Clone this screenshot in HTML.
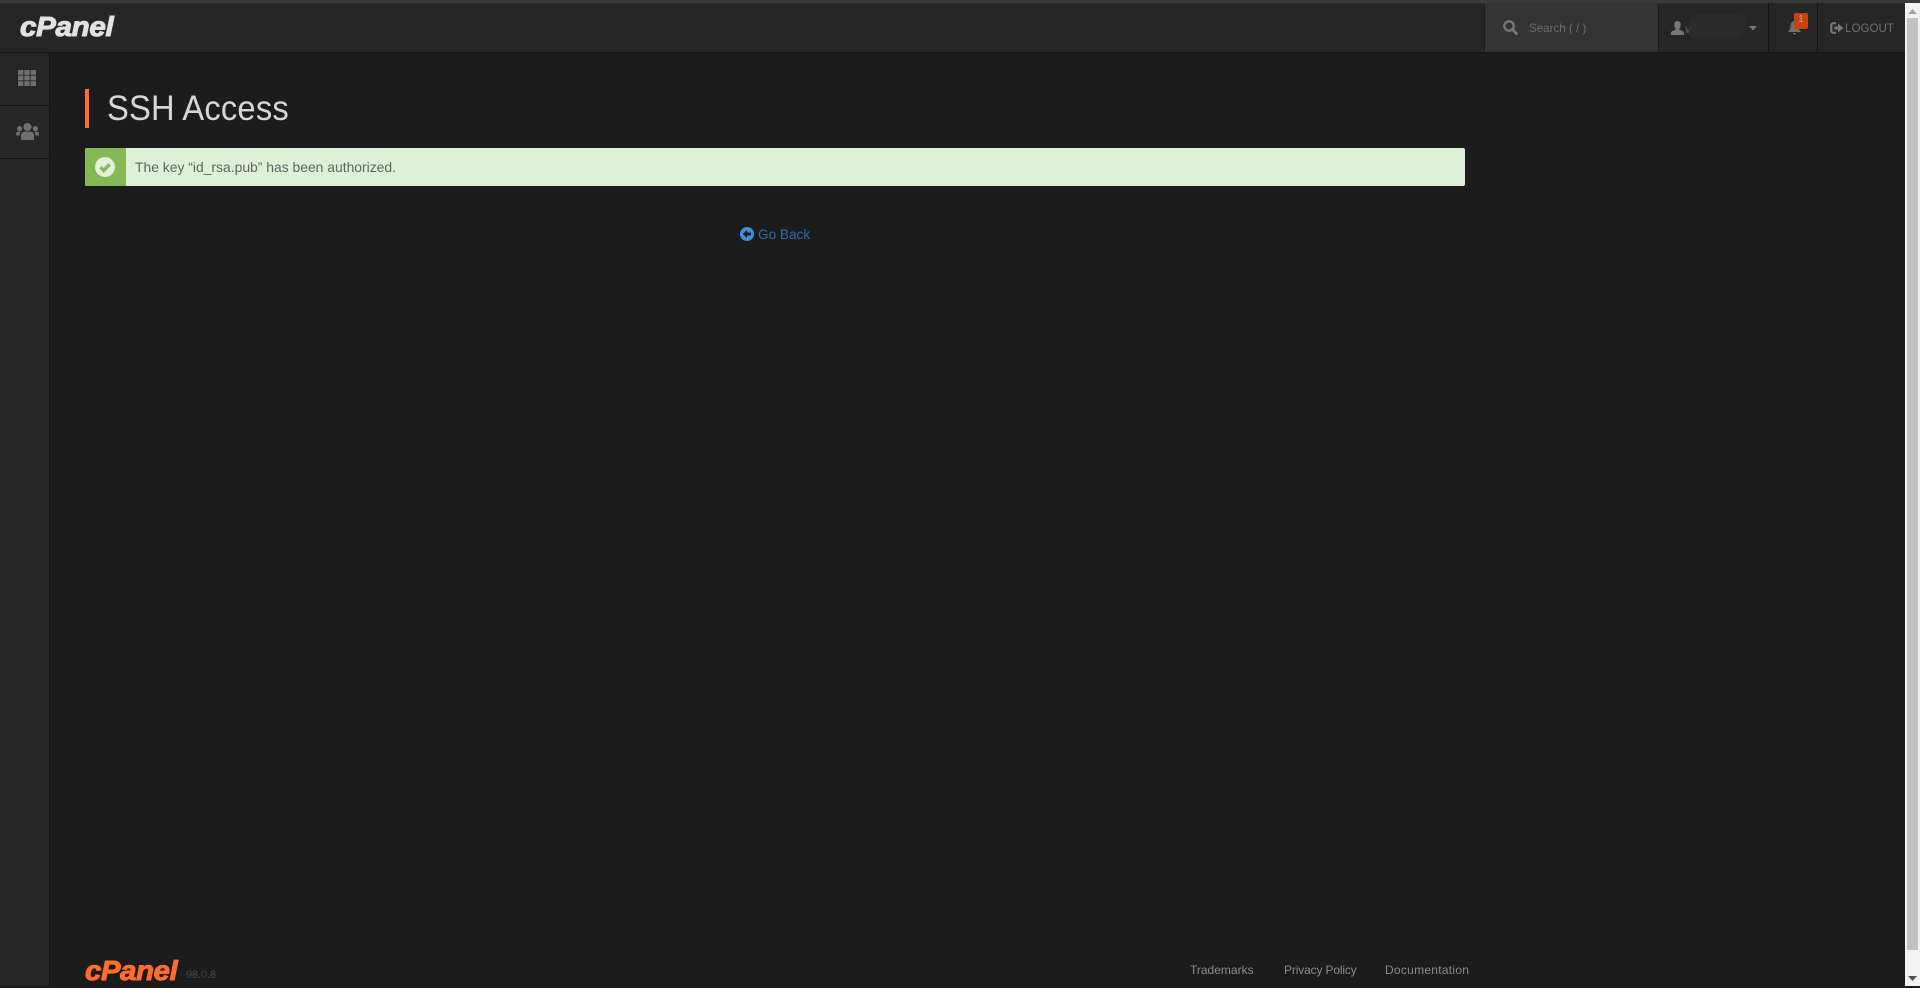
<!DOCTYPE html>
<html><head><meta charset="utf-8"><title>SSH Access</title>
<style>
html,body{margin:0;padding:0;width:1920px;height:986px;overflow:hidden;background:#1c1c1c;font-family:"Liberation Sans",sans-serif}
.a{position:absolute;white-space:nowrap}
a{text-decoration:none}
</style></head><body>
<div class="a" style="left:0;top:0;width:1920px;height:3px;background:#3a3a3a"></div>
<div class="a" style="left:0;top:3px;width:1905px;height:49px;background:#262626;border-bottom:1px solid #151515;box-sizing:content-box"></div>
<div class="a" style="left:0;top:53px;width:49px;height:933px;background:#262626;border-right:1px solid #151515"></div>
<div class="a" style="left:0;top:105px;width:49px;height:1px;background:#151515"></div>
<div class="a" style="left:0;top:158px;width:49px;height:1px;background:#151515"></div>

<div class="a" style="left:20px;top:10px;font:italic 900 28px/34px 'Liberation Sans',sans-serif;color:#e2e2e2;letter-spacing:-.3px;-webkit-text-stroke:1px #e2e2e2;transform:scaleX(1.055);transform-origin:0 0">cPanel</div>

<svg class="a" style="left:18px;top:70px" width="18" height="16" viewBox="0 0 18 16"><g fill="#6f6f6f"><rect width="5.4" height="4.8"/><rect x="6.3" width="5.4" height="4.8"/><rect x="12.6" width="5.4" height="4.8"/><rect y="5.6" width="5.4" height="4.8"/><rect x="6.3" y="5.6" width="5.4" height="4.8"/><rect x="12.6" y="5.6" width="5.4" height="4.8"/><rect y="11.2" width="5.4" height="4.8"/><rect x="6.3" y="11.2" width="5.4" height="4.8"/><rect x="12.6" y="11.2" width="5.4" height="4.8"/></g></svg>
<svg class="a" style="left:16px;top:123px" width="23" height="17" viewBox="0 0 23 17"><g fill="#6f6f6f"><circle cx="11.5" cy="4" r="4"/><circle cx="3.6" cy="5.6" r="2.6"/><circle cx="19.4" cy="5.6" r="2.6"/><path d="M5 16v-4c0-2.2 2-3.4 3.5-3.4h6c1.5 0 3.5 1.2 3.5 3.4v4c0 .6-.5 1-1 1H6c-.5 0-1-.4-1-1z"/><path d="M0 11.500c0-2 1-2.800 2.300-2.800h2.500C3.900 9.500 3.600 10.600 3.600 12.500H1c-.6 0-1-.4-1-1zM23 11.500c0-2-1-2.800-2.300-2.800h-2.500c.9.800 1.200 1.900 1.200 3.800H22c.6 0 1-.4 1-1z"/></g></svg>

<div class="a" style="left:1484px;top:3px;width:173px;height:49px;background:#333;border-left:1px solid #1b1b1b;border-right:1px solid #1b1b1b"></div>
<svg class="a" style="left:1503px;top:20px" width="15" height="15" viewBox="0 0 15 15"><circle cx="6" cy="6" r="4.700" fill="none" stroke="#777" stroke-width="2.300"/><path d="M9.500 9.500L13.500 13.500" stroke="#777" stroke-width="2.800" stroke-linecap="round"/></svg>
<div class="a" style="left:1529px;top:21px;font-size:11.600px;line-height:16px;color:#6c6c6c">Search ( / )</div>

<svg class="a" style="left:1671px;top:21px" width="13" height="14" viewBox="0 0 13 14"><path d="M6.500 0C8.500 0 9.800 1.500 9.800 3.800 9.800 5.500 9 7 8.300 7.800c0 .8.500 1.200 1.500 1.600 1.500.6 3.200 1 3.200 2.600V14H0v-2c0-1.600 1.700-2 3.200-2.600 1-.4 1.500-.8 1.500-1.600C4 7 3.200 5.500 3.200 3.800 3.200 1.500 4.500 0 6.500 0z" fill="#777"/></svg>
<div class="a" style="left:1685px;top:21px;font-size:12px;line-height:16px;color:#666">v</div>
<div class="a" style="left:1689px;top:15px;width:56px;height:24px;background:#2c2c2c;border-radius:5px;filter:blur(1.500px)"></div>
<svg class="a" style="left:1749px;top:26px" width="8" height="5" viewBox="0 0 8 5"><path d="M0 0h8L4 4.500z" fill="#777"/></svg>

<div class="a" style="left:1768px;top:3px;width:1px;height:49px;background:#151515"></div>
<svg class="a" style="left:1788px;top:21px" width="13" height="14" viewBox="0 0 13 14"><path d="M6.500 0C3.500 0 2.500 2.500 2.500 5c0 3-1 4.500-2.500 6h13c-1.500-1.500-2.500-3-2.500-6 0-2.500-1-5-4-5z" fill="#6f6f6f"/><path d="M5 12h3c0 1-.7 1.800-1.500 1.800S5 13 5 12z" fill="#6f6f6f"/></svg>
<div class="a" style="left:1794px;top:13px;width:14px;height:16px;background:#cb4211;border-radius:2px;color:#b0a8a0;font-size:10px;line-height:14px;text-align:center">1</div>
<div class="a" style="left:1817px;top:3px;width:1px;height:49px;background:#151515"></div>

<svg class="a" style="left:1830px;top:22px" width="14" height="12" viewBox="0 0 14 12"><path d="M6 1.200H3.500C2 1.200 1.200 2 1.200 3.500v5c0 1.500.8 2.300 2.300 2.300H6" fill="none" stroke="#777" stroke-width="2.200"/><path d="M4.500 4.500H8V1.500L13.500 6 8 10.500v-3H4.500z" fill="#777"/></svg>
<div class="a" style="left:1845px;top:21px;font-size:11.600px;line-height:16px;color:#6f6f6f">LOGOUT</div>

<div class="a" style="left:1905px;top:3px;width:15px;height:983px;background:#f1f1f1"></div>
<svg class="a" style="left:1908px;top:9px" width="9" height="5" viewBox="0 0 9 5"><path d="M4.500 0L9 5H0z" fill="#a3a3a3"/></svg>
<div class="a" style="left:1907px;top:18px;width:11px;height:932px;background:#c1c1c1"></div>
<svg class="a" style="left:1908px;top:976px" width="9" height="5" viewBox="0 0 9 5"><path d="M0 0h9L4.500 5z" fill="#505050"/></svg>

<div class="a" style="left:85px;top:89px;width:4px;height:39px;background:#ff6c2c"></div>
<div class="a" style="left:107px;top:86px;font-size:35px;line-height:46px;color:#d6d6d6;letter-spacing:.2px;transform:scaleX(.935);transform-origin:0 0">SSH Access</div>

<div class="a" style="left:85px;top:148px;width:1380px;height:38px;background:#dff0d8;border-radius:2px"></div>
<div class="a" style="left:85px;top:148px;width:41px;height:38px;background:#86b856;border-radius:2px 0 0 2px"></div>
<svg class="a" style="left:95px;top:157px" width="20" height="20" viewBox="0 0 20 20"><circle cx="10" cy="10" r="10" fill="#e4f1da"/><path d="M5.500 10.200l3.200 3.200 6-6" fill="none" stroke="#86b856" stroke-width="3.500"/></svg>
<div class="a" style="left:135px;top:158px;font-size:13.900px;line-height:18px;color:#5f6660">The key “id_rsa.pub” has been authorized.</div>

<svg class="a" style="left:740px;top:227px" width="14" height="14" viewBox="0 0 14 14"><circle cx="7" cy="7" r="7" fill="#3f8fd8"/><path d="M2.800 7L7 3v2.500h4v3H7V11z" fill="#1c1c1c"/></svg>
<a class="a" style="left:758px;top:226px;font-size:13.600px;line-height:18px;color:#2c6ca8">Go Back</a>

<div class="a" style="left:85px;top:954px;font:italic 900 28px/34px 'Liberation Sans',sans-serif;color:#ff6c2c;letter-spacing:-.3px;-webkit-text-stroke:1px #ff6c2c;transform:scaleX(1.045);transform-origin:0 0">cPanel</div>
<div class="a" style="left:186px;top:968px;font-size:10.800px;line-height:14px;color:#4a4a4a">98.0.8</div>
<a class="a" style="left:1190px;top:962px;font-size:12px;line-height:16px;color:#8b8b8b">Trademarks</a>
<a class="a" style="left:1284px;top:962px;font-size:12px;line-height:16px;letter-spacing:-.15px;color:#8b8b8b">Privacy Policy</a>
<a class="a" style="left:1385px;top:962px;font-size:12px;line-height:16px;letter-spacing:.27px;color:#8b8b8b">Documentation</a>
</body></html>
